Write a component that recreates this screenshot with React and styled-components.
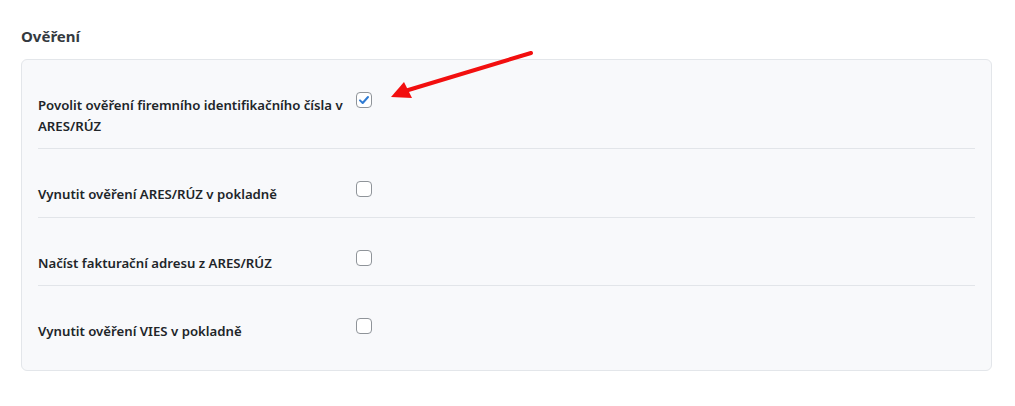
import styled, { createGlobalStyle } from "styled-components";

const Global = createGlobalStyle`
  html, body {
    margin: 0;
    padding: 0;
    background: #ffffff;
  }
  body {
    font-family: "Segoe UI", "Noto Sans", "Open Sans", sans-serif;
    color: #212529;
  }
`;

const Page = styled.div`
  position: relative;
  width: 1015px;
  height: 406px;
  padding: 26px 23px 0 21px;
  box-sizing: border-box;
`;

const Heading = styled.h3`
  margin: 0 0 13px;
  font-size: 15px;
  line-height: 20px;
  font-weight: 700;
  color: #343a40;
`;

const Card = styled.div`
  background: #f8f9fb;
  border: 1px solid #e3e6ea;
  border-radius: 6px;
  padding: 0 16px 16px;
`;

const Row = styled.div`
  display: grid;
  grid-template-columns: 314px 1fr;
  column-gap: 4px;
  padding: 35px 0 12px;
  border-bottom: ${(p) => (p.$last ? "none" : "1px solid #e2e5e9")};
`;

const Label = styled.div`
  font-size: 13.2px;
  line-height: 20.5px;
  font-weight: 600;
  color: #212529;
`;

const Box = styled.span`
  display: flex;
  align-items: center;
  justify-content: center;
  width: 16px;
  height: 16px;
  margin-top: -3px;
  box-sizing: border-box;
  border: 1px solid #8f9499;
  border-radius: 4px;
  background: #ffffff;
`;

const Arrow = styled.svg`
  position: absolute;
  top: 0;
  left: 0;
  pointer-events: none;
`;

function Checkbox({ checked }) {
  return (
    <Box>
      {checked && (
        <svg width="12" height="12" viewBox="0 0 12 12">
          <path
            d="M2 6.4 L4.7 9 L10 3"
            fill="none"
            stroke="#2f7bd3"
            strokeWidth="2"
            strokeLinecap="round"
            strokeLinejoin="round"
          />
        </svg>
      )}
    </Box>
  );
}

const rows = [
  { label: "Povolit ověření firemního identifikačního čísla v ARES/RÚZ", checked: true },
  { label: "Vynutit ověření ARES/RÚZ v pokladně", checked: false },
  { label: "Načíst fakturační adresu z ARES/RÚZ", checked: false },
  { label: "Vynutit ověření VIES v pokladně", checked: false },
];

export default function App() {
  return (
    <>
      <Global />
      <Page>
        <Heading>Ověření</Heading>
        <Card>
          {rows.map((r, i) => (
            <Row key={i} $last={i === rows.length - 1}>
              <Label>{r.label}</Label>
              <div>
                <Checkbox checked={r.checked} />
              </div>
            </Row>
          ))}
        </Card>
        <Arrow width="1015" height="406" viewBox="0 0 1015 406">
          <line x1="531" y1="53" x2="405" y2="91" stroke="#f20f0f" strokeWidth="4" strokeLinecap="round" />
          <polygon points="391,97 404,82 412,98" fill="#f20f0f" />
        </Arrow>
      </Page>
    </>
  );
}
